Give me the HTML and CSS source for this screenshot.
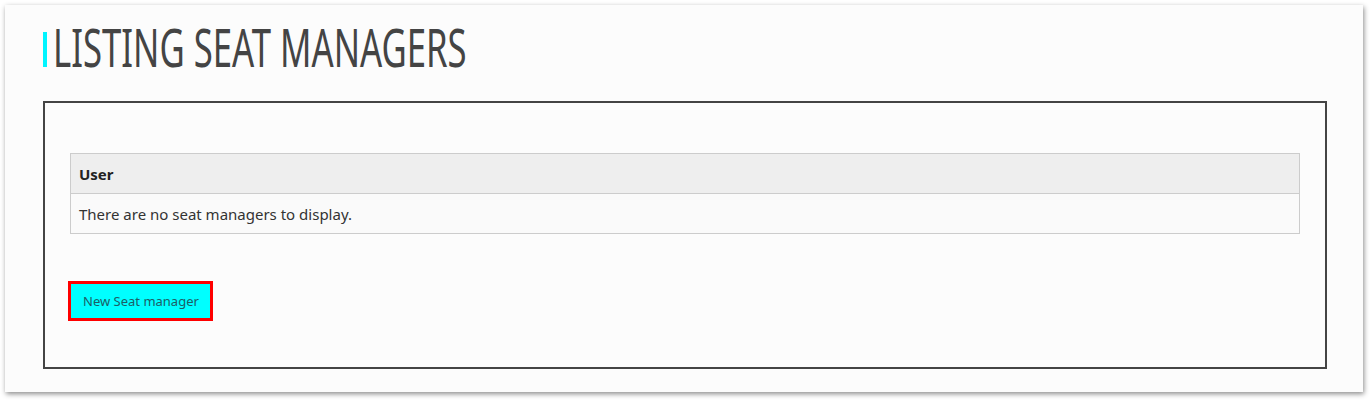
FILE: index.html
```html
<!DOCTYPE html>
<html lang="en">
  <head>
    <meta charset="UTF-8" />
    <title>Listing Seat Managers</title>
    <link rel="stylesheet" href="styles.css">
  </head>
  <body>
    <div class="card">
      <h1 class="page-title"><span class="title-text">Listing Seat Managers</span></h1>

      <div class="panel">
        <table class="list">
          <thead>
            <tr><th>User</th></tr>
          </thead>
          <tbody>
            <tr><td>There are no seat managers to display.</td></tr>
          </tbody>
        </table>

        <a class="new-button" href="#">New Seat manager</a>
      </div>
    </div>
  </body>
</html>
```

FILE: styles.css
```css
body {
  margin: 0;
  background-color: #fff;
  font-family: "Noto Sans", "Open Sans", sans-serif;
  color: #333;
}
.card {
  margin: 5px 9px 9px 5px;
  padding: 16px 36px 23px 38px;
  background-color: #fcfcfc;
  box-shadow: 1px 2px 5px rgb(0 0 0 / 45%);
}
.page-title {
  margin: 0 0 28px 0;
  font-family: "Noto Sans", sans-serif;
  font-weight: normal;
  font-size: 52px;
  line-height: 52px;
  height: 52px;
  color: #444;
  text-transform: uppercase;
  white-space: nowrap;
}
.page-title::before {
  content: "";
  display: inline-block;
  width: 4px;
  height: 35px;
  margin-right: 6px;
  background-color: #00f5ff;
}
.title-text {
  display: inline-block;
  transform: scaleX(0.667);
  transform-origin: left center;
}
.panel {
  border: 2px solid #444;
  padding: 50px 25px 46px 25px;
}
.list {
  width: 100%;
  border-collapse: collapse;
  font-size: 15px;
}
.list th,
.list td {
  text-align: left;
  padding: 0 8px;
  height: 39px;
  border: 1px solid #ccc;
}
.list th {
  background-color: #eee;
  color: #222;
  font-weight: bold;
}
.list td {
  background-color: #fafafa;
}
.new-button {
  display: block;
  width: fit-content;
  margin-top: 47px;
  margin-left: -2px;
  padding: 0 11px 0 12px;
  height: 34px;
  line-height: 34px;
  background-color: #00ffff;
  border: 3px solid #f00;
  color: #1d5d66;
  font-size: 13px;
  text-decoration: none;
}
```
